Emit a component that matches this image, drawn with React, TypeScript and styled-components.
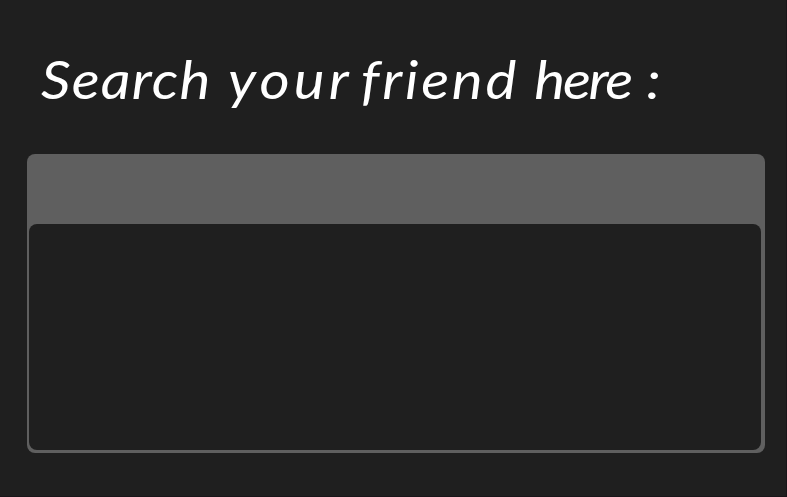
import React from "react";
import styled, { createGlobalStyle } from "styled-components";

const GlobalStyle = createGlobalStyle`
  * { box-sizing: border-box; }
  body { margin: 0; background: #1f1f1f; }
`;

const Page = styled.main`
  width: 787px;
  height: 497px;
  padding: 52px 21px 0 27px;
  overflow: hidden;
  background: #1f1f1f;
  border-right: 1px solid #191519;
  border-bottom: 1px solid #191519;
`;

const Title = styled.h1`
  display: flex;
  margin: 0 0 0 14px;
  height: 102px;
  color: #fff;
  font: italic 400 52px/54px "Bradley Hand ITC", "Bradley Hand", "Segoe Print", "Lato", cursive;
  white-space: pre;
  transform: scaleX(1.12);
  transform-origin: left top;
`;

const Word = styled.span<{ $width: number; $tracking: number }>`
  flex: none;
  width: ${(p) => p.$width}px;
  letter-spacing: ${(p) => p.$tracking}px;
`;

const SearchBox = styled.section`
  height: 299px;
  padding: 0 4px 3px 2px;
  display: flex;
  flex-direction: column;
  background: #5f5f5f;
  border-radius: 8px;
`;

const SearchField = styled.input`
  height: 70px;
  flex: none;
  width: 100%;
  border: 0;
  outline: 0;
  padding: 0 20px;
  background: transparent;
  color: #fff;
  font: 24px "Liberation Sans", sans-serif;
`;

const Results = styled.div`
  flex: 1;
  background: #1f1f1f;
  border-radius: 8px;
`;

export default function App() {
  return (
    <>
      <GlobalStyle />
      <Page>
        <Title>
          <Word $width={167} $tracking={1.1}>{"Search "}</Word>
          <Word $width={118.5} $tracking={3.7}>{"your "}</Word>
          <Word $width={155} $tracking={2.5}>{"friend "}</Word>
          <Word $width={100} $tracking={-2}>{"here "}</Word>
          <Word $width={20} $tracking={0}>:</Word>
        </Title>
        <SearchBox>
          <SearchField type="text" aria-label="Search your friend" />
          <Results />
        </SearchBox>
      </Page>
    </>
  );
}
